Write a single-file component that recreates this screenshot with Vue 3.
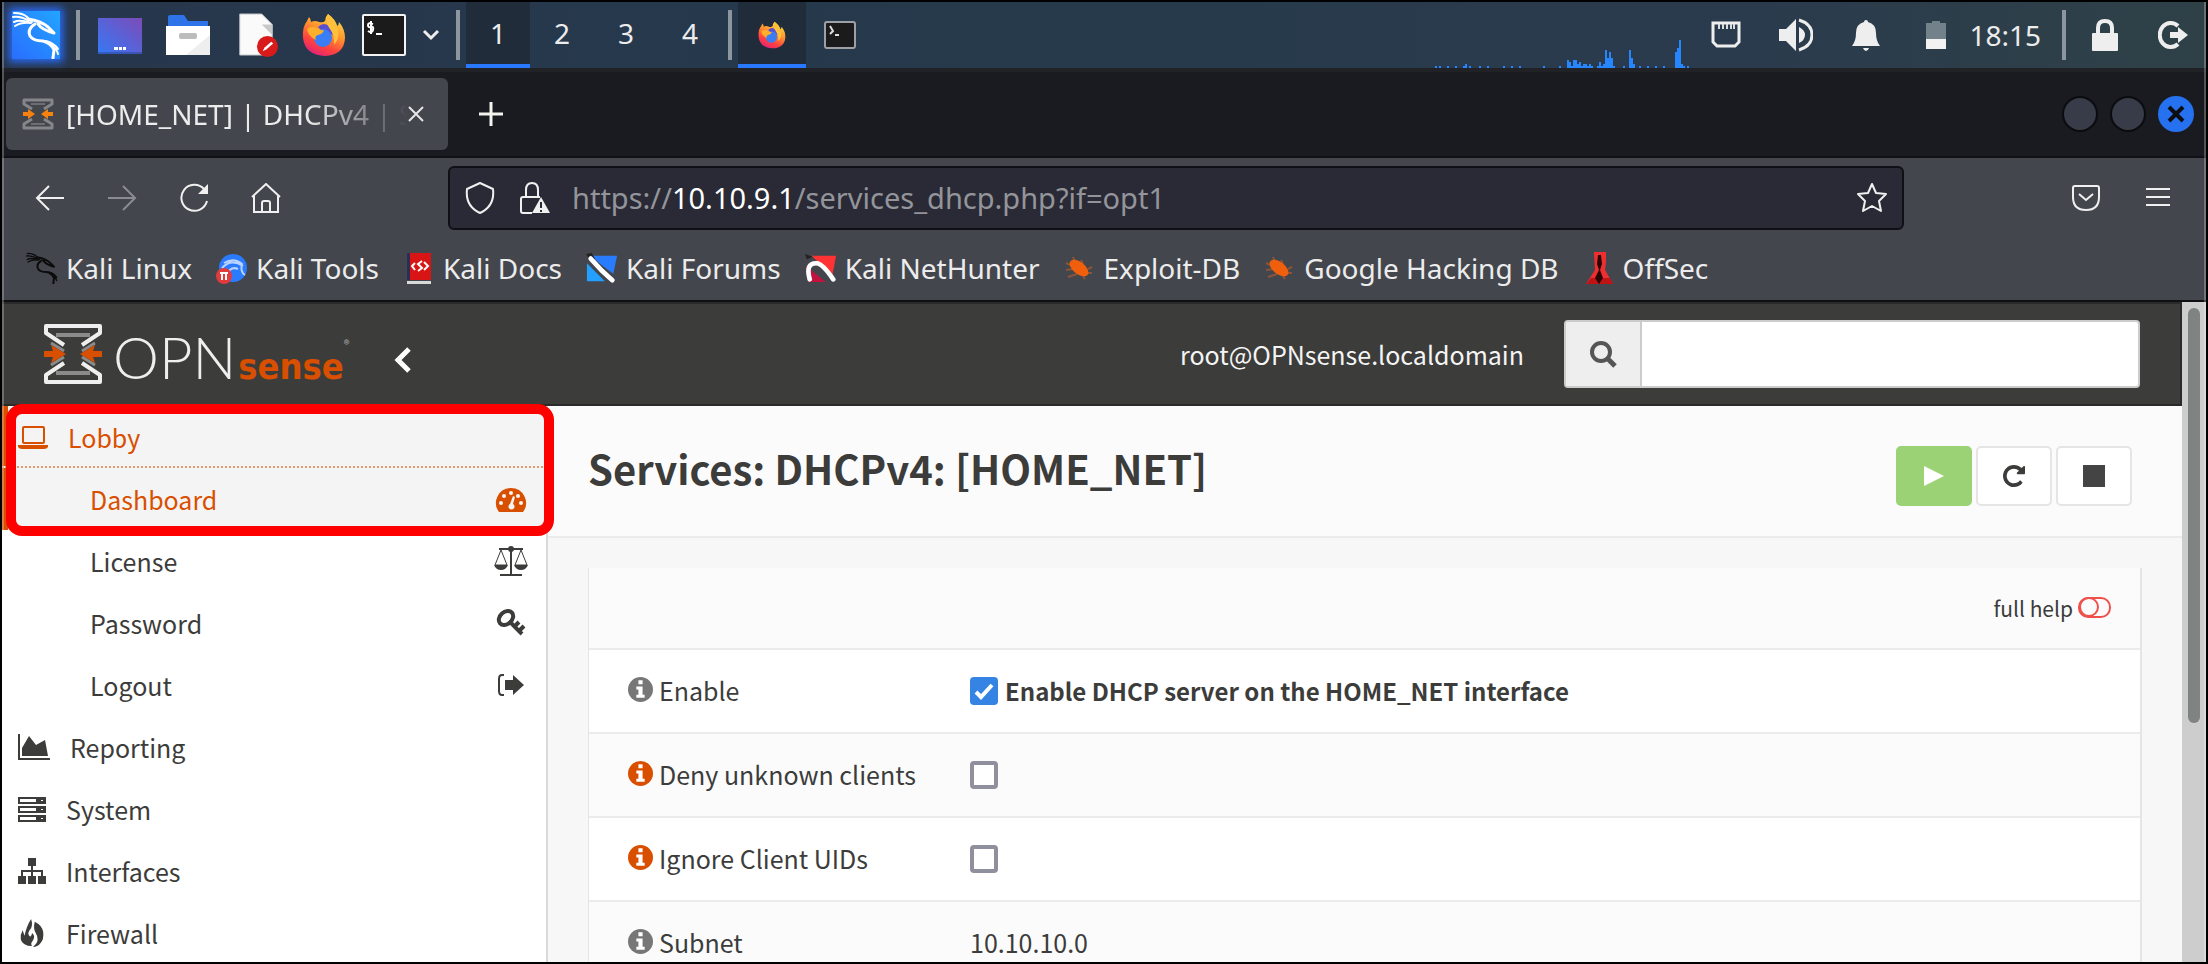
<script setup>
import { ref } from 'vue'

const workspaces = [1, 2, 3, 4]
const activeWorkspace = ref(1)
const search = ref('')

const load = [
  [0, 2], [4, 2], [12, 2], [20, 2], [28, 2], [30, 4], [34, 2], [44, 2], [52, 2], [68, 2], [76, 2], [84, 2],
  [108, 2], [124, 2], [132, 8], [134, 6], [136, 2], [138, 8], [140, 8], [142, 4], [144, 6], [146, 2],
  [148, 4], [150, 4], [152, 2], [154, 4], [156, 2], [162, 2], [164, 6], [166, 2], [168, 4], [170, 18],
  [172, 10], [174, 16], [176, 10], [178, 2], [188, 2], [194, 18], [196, 10], [198, 4], [204, 2],
  [212, 2], [220, 2], [228, 2], [240, 16], [242, 20], [244, 28], [246, 4], [248, 2], [252, 2],
]

const bookmarks = [
  { label: 'Kali Linux', icon: 'bm-dragon' },
  { label: 'Kali Tools', icon: 'bm-tools' },
  { label: 'Kali Docs', icon: 'bm-docs' },
  { label: 'Kali Forums', icon: 'bm-forums' },
  { label: 'Kali NetHunter', icon: 'bm-hunter' },
  { label: 'Exploit-DB', icon: 'bm-bug' },
  { label: 'Google Hacking DB', icon: 'bm-bug' },
  { label: 'OffSec', icon: 'bm-offsec' },
]

const lobby = [
  { label: 'Dashboard', icon: 'i-gauge', active: true },
  { label: 'License', icon: 'i-scale' },
  { label: 'Password', icon: 'i-key' },
  { label: 'Logout', icon: 'i-exit' },
]

const sections = [
  { label: 'Reporting', icon: 'i-chart', wide: true },
  { label: 'System', icon: 'i-server' },
  { label: 'Interfaces', icon: 'i-sitemap' },
  { label: 'Firewall', icon: 'i-fire' },
]

const rows = ref([
  { id: 'enable', label: 'Enable', checked: true, note: 'Enable DHCP server on the HOME_NET interface' },
  { id: 'deny', label: 'Deny unknown clients', checked: false, help: true },
  { id: 'ignore', label: 'Ignore Client UIDs', checked: false, help: true },
  { id: 'subnet', label: 'Subnet', value: '10.10.10.0' },
])
</script>

<template>
  <div class="screen">
    <svg class="defs" aria-hidden="true">
      <defs>
        <linearGradient id="g-desk" x1="0" y1="1" x2="1" y2="0">
          <stop offset="0" stop-color="#3579f6" /><stop offset="1" stop-color="#7d4bb8" />
        </linearGradient>
        <linearGradient id="g-kali" x1="0" y1="1" x2="1" y2="0">
          <stop offset="0" stop-color="#2a6dff" /><stop offset="1" stop-color="#22a5ff" />
        </linearGradient>
        <linearGradient id="g-fox" x1="0.8" y1="0" x2="0.3" y2="1">
          <stop offset="0" stop-color="#ffe14a" /><stop offset="0.4" stop-color="#ff9a2e" />
          <stop offset="0.75" stop-color="#ff4040" /><stop offset="1" stop-color="#e0217a" />
        </linearGradient>
      </defs>
      <symbol id="dragon" viewBox="0 0 48 48">
        <g fill="none" stroke="currentColor" stroke-linecap="round" stroke-linejoin="round">
          <path d="M2 2Q11 2 15 6L20 11M1 6Q9 5 17 10M2 11Q8 8 18 12M3 15Q9 11 19 12" stroke-width="2" />
          <path d="M16 8Q29 10 36 16L42 22M26 13Q30 19 42 22" stroke-width="3" />
          <path d="M23 13Q15 18 18 25Q21 30 31 30Q39 32 42 39L41 47" stroke-width="3" />
          <path d="M34 30Q42 32 46 38M39 34Q45 38 46 43" stroke-width="2" />
        </g>
      </symbol>
      <symbol id="firefox" viewBox="0 0 44 44">
        <path fill="url(#g-fox)" d="M26 1Q34 7 35 13Q37 12 37 9Q43 16 43 25Q42 42 23 43Q3 42 1 25Q0 14 5 8Q6 6 7 4Q9 6 9 9Q13 7 17 9Q21 10 23 8Q23 4 26 1z" />
        <path fill="#5a4fd0" d="M16 14Q22 8 28 14L31 22L20 18z" />
        <circle cx="21" cy="25" r="9" fill="#3a7df5" />
        <path fill="#ffb02a" d="M5 16Q10 12 17 16Q20 18 22 17Q21 21 16 22Q12 23 14 27Q6 23 5 16z" />
        <path fill="#ffc03c" d="M26 1Q34 7 35 14Q39 24 32 32Q33 22 28 16Q23 10 26 1z" />
      </symbol>
      <symbol id="sense-mark" viewBox="0 0 58 60">
        <g fill="none" stroke="#efefef" stroke-width="4" stroke-linejoin="round">
          <path d="M20 21L2 9V2H56V9L38 21" /><path d="M20 39L2 51V58H56V51L38 39" />
        </g>
        <path d="M12 11H46M12 49H46" stroke="#8b8b8b" stroke-width="4" />
        <path d="M7 19l13 8M51 19l-13 8M7 41l13-8M51 41l-13-8" stroke="#8b8b8b" stroke-width="3" />
        <path fill="#d94f00" d="M0 27H9L7 21L22 30L7 39L9 33H0zM58 27H49L51 21L36 30L51 39L49 33H58z" />
      </symbol>
      <symbol id="sense-fav" viewBox="0 0 32 32">
        <g fill="none" stroke="#85868a" stroke-width="3" stroke-linejoin="round">
          <path d="M10 11L2 6V2H30V6L22 11M10 21L2 26V30H30V26L22 21" />
          <path d="M9 6H23M9 26H23" stroke="#6d6e73" stroke-width="2" />
        </g>
        <path fill="#f5820f" d="M1 14H6V11L13 16L6 21V18H1zM31 14H26V11L19 16L26 21V18H31z" />
      </symbol>
      <symbol id="bm-dragon" viewBox="0 0 48 48"><use href="#dragon" color="#0c0c0c" /></symbol>
      <symbol id="bm-tools" viewBox="0 0 32 32">
        <circle cx="17" cy="16" r="14" fill="#2b7bff" />
        <path d="M6 16Q15 6 27 14M8 11Q18 5 26 12Q24 20 29 23M12 21Q15 14 22 17" fill="none" stroke="#b9d4ff" stroke-width="2" />
        <circle cx="8" cy="24" r="8" fill="#e23b3b" />
        <path d="M4 21H12M6 21V28M10 21V28" stroke="#fff" stroke-width="2" />
      </symbol>
      <symbol id="bm-docs" viewBox="0 0 32 32">
        <path fill="#d81414" d="M4 1H28V28H4z" /><path fill="#2b2d52" d="M4 1H7V28H4z" />
        <path fill="#d9d9d9" d="M4 29H28V32H4z" />
        <path d="M12 11l-3 3 3 4M21 10l4 4-4 4M19 9l-4 3 4 4-4 3" fill="none" stroke="#fff" stroke-width="2" />
      </symbol>
      <symbol id="bm-forums" viewBox="0 0 34 32">
        <path fill="#2a7cff" d="M3 3H33L29 22z" /><path fill="#23a0ff" d="M1 11L20 30H1z" />
        <path fill="#222" d="M0 1l6-1 4 7-6 1z" />
        <path d="M5 6L17 19L28 29" stroke="#fff" stroke-width="5" stroke-linecap="round" />
        <path d="M10 7L20 17L27 24" stroke="#444a" stroke-width="1" />
      </symbol>
      <symbol id="bm-hunter" viewBox="0 0 34 32">
        <path fill="#f33" d="M7 3H33L29 24z" /><path fill="#c4123f" d="M1 14L22 31H4z" />
        <path fill="#222" d="M0 1L8 4L2 7z" />
        <path d="M5 28Q0 10 13 11Q19 12 30 28" stroke="#fff" stroke-width="5" fill="none" stroke-linecap="round" />
      </symbol>
      <symbol id="bm-bug" viewBox="0 0 32 32">
        <path d="M9 5L11 11M17 8L19 12M2 11L9 14M2 18L9 17M4 25L13 22M28 15L24 17M28 21L24 21M21 27L19 24" stroke="#8d5338" stroke-width="2" />
        <ellipse cx="15" cy="16" rx="11" ry="6" fill="#f0600c" transform="rotate(38 15 16)" />
      </symbol>
      <symbol id="bm-offsec" viewBox="0 0 32 32">
        <path fill="#ef2f2f" d="M11 0H23V10L22 18L30 32H3L12 18z" /><path fill="#c01414" d="M8 26H27L30 32H3z" />
        <path fill="#2a0505" d="M15 3H18L19 12L17 18L20 26L16 32L12 26L16 18L14 12z" />
      </symbol>

      <symbol id="i-laptop" viewBox="0 0 30 24">
        <rect x="5" y="2" width="21" height="16" rx="1" fill="none" stroke="currentColor" stroke-width="2" />
        <path fill="currentColor" d="M0 20H30V22Q29 24 26 24H4Q1 24 0 22z" />
      </symbol>
      <symbol id="i-gauge" viewBox="-3 -4 36 30">
        <path fill="currentColor" d="M15 0A15 15 0 0 1 27 24H3A15 15 0 0 1 15 0z" />
        <g fill="#f4f4f4"><circle cx="5" cy="15" r="2" /><circle cx="8" cy="8" r="2" /><circle cx="15" cy="5" r="2" />
          <circle cx="22" cy="8" r="2" /><circle cx="25" cy="15" r="2" /><path d="M17 8L19 9L17 16A3 3 0 1 1 14 16z" /></g>
      </symbol>
      <symbol id="i-scale" viewBox="0 0 36 30">
        <path fill="none" stroke="currentColor" stroke-width="2" d="M6 3H30M18 1V28M7 29H29" />
        <path fill="none" stroke="currentColor" stroke-width="1" d="M8 4L2 19H14zM28 4L22 19H34z" />
        <path fill="currentColor" d="M1 19H15Q13 24 8 24T1 19zM21 19H35Q33 24 28 24T21 19z" />
        <circle cx="18" cy="3" r="3" fill="currentColor" />
      </symbol>
      <symbol id="i-key" viewBox="-4 0 36 30">
        <ellipse cx="9" cy="10" rx="8" ry="6" transform="rotate(-42 9 10)" fill="none" stroke="currentColor" stroke-width="4" />
        <path fill="none" stroke="currentColor" stroke-width="4" d="M12 13L25 26M18 18L22 14M22 23L27 18" />
      </symbol>
      <symbol id="i-exit" viewBox="-4 -4 36 30">
        <path fill="none" stroke="currentColor" stroke-width="2" d="M7 1H5Q2 1 2 5V17Q2 21 5 21H7" />
        <path fill="currentColor" d="M8 6H16V1L27 11L16 21V16H8z" />
      </symbol>
      <symbol id="i-chart" viewBox="0 0 32 26">
        <path fill="currentColor" d="M0 0H2V24H32V26H0zM4 22V14L11 2L18 11L27 6L30 22z" />
      </symbol>
      <symbol id="i-server" viewBox="0 0 28 26">
        <g fill="none" stroke="currentColor" stroke-width="2"><path d="M1 2H27V7H1zM1 11H27V16H1zM1 20H27V25H1z" /></g>
        <path fill="currentColor" d="M18 2H27V7H18zM18 11H27V16H18zM18 20H27V25H18z" />
        <path fill="#fff" d="M23 4H25V5H23zM23 13H25V14H23zM23 22H25V23H23z" />
      </symbol>
      <symbol id="i-sitemap" viewBox="0 0 28 26">
        <path fill="currentColor" d="M10 0H18V8H10zM0 18H8V26H0zM10 18H18V26H10zM20 18H28V26H20z" />
        <path fill="none" stroke="currentColor" stroke-width="2" d="M14 8V18M4 18V13H24V18" />
      </symbol>
      <symbol id="i-fire" viewBox="0 0 28 30">
        <path fill="currentColor" d="M13 0Q15 6 13 10Q11 12 10 15Q10 18 12 19Q14 18 14 15Q18 18 15 23Q12 26 14 29Q4 29 2 22Q1 17 4 12L6 18Q8 8 13 0z" />
        <path fill="currentColor" d="M17 3Q25 7 26 14Q27 22 23 26Q20 30 15 30Q20 26 20 22Q20 18 18 15Q15 10 17 3z" />
      </symbol>
      <symbol id="i-repeat" viewBox="0 0 1536 1792">
        <path fill="currentColor" d="M1536 256v448q0 26-19 45t-45 19h-448q-42 0-59-40-17-39 14-69l138-138Q969 384 768 384q-104 0-198 40T406 534 296 697 256 896t40 198T406 1258t163 110T768 1408q119 0 225-52t179-147q7-10 23-12 15 0 25 9l137 138q9 8 9 20T1357 1387q-109 132-264 204T768 1664q-156 0-298-61t-245-164-164-245T0 896t61-298 164-245T470 189t298-61q147 0 284 55T1297 340l130-129q29-31 70-14 39 17 39 59z" />
      </symbol>
    </svg>

    <header class="panel">
      <button class="flat kali" aria-label="Applications">
        <svg viewBox="0 0 48 48"><rect width="48" height="48" fill="url(#g-kali)" /><use href="#dragon" width="48" height="48" color="#fff" /></svg>
      </button>
      <i class="sep"></i>
      <div class="launchers">
        <button class="flat" aria-label="Show desktop">
          <svg class="ic44" viewBox="0 0 44 44"><path fill="url(#g-desk)" d="M0 5H44V41H0z" /><path fill="#24428c" opacity=".5" d="M0 39H44V41H0z" /><path fill="#fff" d="M16 34H20V37H16zM21 34H24V37H21zM25 34H28V37H25z" /></svg>
        </button>
        <button class="flat" aria-label="Files">
          <svg class="ic44" viewBox="0 0 44 44"><path fill="#2f73e8" d="M2 4Q2 2 4 2H18L22 8H42V14H2z" /><path fill="#fff" d="M0 13H44V42H0z" /><path fill="#eee" d="M44 22V42H20z" /><rect x="13" y="20" width="18" height="6" rx="2" fill="#bcbcbc" /></svg>
        </button>
        <button class="flat" aria-label="Text editor">
          <svg class="ic44" viewBox="0 0 44 46"><path fill="#fafafa" stroke="#b9bec4" d="M5 1H28L39 12V44H5z" /><path fill="#c9c9c9" d="M28 12H39V23z" /><circle cx="34" cy="35" r="11" fill="#d81a1a" /><path d="M29 40L31 36L38 30L40 32L33 38z" fill="#fff" /></svg>
        </button>
        <button class="flat" aria-label="Firefox"><svg class="ic44"><use href="#firefox" /></svg></button>
      </div>
      <div class="terminal-launch">
        <button class="flat" aria-label="Terminal">
          <svg class="ic44" viewBox="0 0 44 44"><rect x="1" y="2" width="42" height="40" rx="1" fill="#1b1b1b" stroke="#f4f4f4" stroke-width="2" /><path d="M11 11Q6 9 6 12T9 14T11 17T6 18M9 8V21" fill="none" stroke="#fff" stroke-width="2" /><path fill="#fff" d="M14 20H20V22H14z" /></svg>
        </button>
        <button class="flat" aria-label="More terminals"><svg width="18" height="12" viewBox="0 0 18 12"><path d="M2 2L9 9L16 2" fill="none" stroke="#eee" stroke-width="3" /></svg></button>
      </div>
      <i class="sep"></i>
      <nav class="spaces">
        <button v-for="n in workspaces" :key="n" class="flat space" :class="{ on: n === activeWorkspace }" @click="activeWorkspace = n">{{ n }}</button>
      </nav>
      <i class="sep near"></i>
      <div class="tasks">
        <button class="flat task on" aria-label="Firefox window"><svg width="28" height="28"><use href="#firefox" /></svg></button>
        <button class="flat task" aria-label="Terminal window">
          <svg width="32" height="28" viewBox="0 0 32 28"><rect x="1" y="1" width="30" height="26" rx="2" fill="#1b1b1b" stroke="#9da1a5" stroke-width="2" /><path d="M6 5L9 10L6 13M11 14H15" fill="none" stroke="#ddd" stroke-width="2" /></svg>
        </button>
      </div>
      <svg class="load" width="256" height="66" viewBox="0 0 256 66" aria-hidden="true">
        <rect v-for="b in load" :key="b[0]" :x="b[0]" :y="66 - b[1]" width="2" :height="b[1]" fill="#2686ff" />
      </svg>
      <div class="tray">
        <button class="flat" aria-label="Network"><svg width="30" height="28" viewBox="0 0 30 28"><path d="M2 2H28V21L24 25H6L2 21z" fill="none" stroke="#eee" stroke-width="3" /><path d="M8 3V8M12 3V8M16 3V8M20 3V8M23 3V8" stroke="#ddd" stroke-width="2" /></svg></button>
        <button class="flat" aria-label="Volume"><svg width="34" height="34" viewBox="0 0 34 34"><path fill="#eee" d="M0 11H7L17 1V33L7 23H0z" /><path d="M20 9Q26 12 26 17T20 25z" fill="#eee" /><path d="M20 2Q33 6 33 17T20 32" fill="none" stroke="#eee" stroke-width="3" /></svg></button>
        <button class="flat" aria-label="Notifications"><svg width="28" height="32" viewBox="0 0 28 32"><path fill="#eee" d="M14 1Q16 1 16 3Q24 5 24 14Q24 22 28 27H0Q4 22 4 14Q4 5 12 3Q12 1 14 1zM11 29H17Q16 32 14 32T11 29z" /></svg></button>
        <button class="flat" aria-label="Battery"><svg width="20" height="28" viewBox="0 0 20 28"><path fill="#72818a" d="M6 0H14V2H20V18H0V2H6z" /><path fill="#f2f2f2" d="M0 18H20V28H0z" /></svg></button>
        <time>18:15</time>
        <i class="sep"></i>
        <button class="flat" aria-label="Lock"><svg width="28" height="32" viewBox="0 0 28 32"><path d="M7 16V9Q7 2 14 2T21 9V16" fill="none" stroke="#eee" stroke-width="4" /><rect y="14" x="1" width="26" height="18" rx="1" fill="#eee" /></svg></button>
        <button class="flat" aria-label="Log out"><svg width="30" height="28" viewBox="0 0 30 28"><path d="M20 5A11 12 0 1 0 20 23" fill="none" stroke="#eee" stroke-width="4" /><path fill="#eee" d="M12 11H20V6L30 14L20 22V17H12z" /></svg></button>
      </div>
    </header>

    <div class="window">
      <div class="tabstrip">
        <div class="tab">
          <svg class="favicon"><use href="#sense-fav" /></svg>
          <span class="tab-title">[HOME_NET] | DHCPv4 | S</span>
          <button class="flat" aria-label="Close tab"><svg width="16" height="16" viewBox="0 0 16 16"><path d="M1 1L15 15M15 1L1 15" stroke="#e6e6e6" stroke-width="2" /></svg></button>
        </div>
        <button class="flat newtab" aria-label="New tab"><svg width="26" height="26" viewBox="0 0 26 26"><path d="M13 1V25M1 13H25" stroke="#f2f2ee" stroke-width="3" /></svg></button>
        <div class="controls">
          <button class="flat dot" aria-label="Minimize"></button>
          <button class="flat dot" aria-label="Maximize"></button>
          <button class="flat dot close" aria-label="Close"><svg width="18" height="18" viewBox="0 0 18 18"><path d="M2 2L16 16M16 2L2 16" stroke="#0b0d12" stroke-width="4" /></svg></button>
        </div>
      </div>

      <div class="toolbar">
        <div class="navbtns">
          <button class="flat" aria-label="Back"><svg width="30" height="30" viewBox="0 0 30 30"><path d="M29 15H2M14 3L2 15L14 27" fill="none" stroke="#f0f0f0" stroke-width="2" /></svg></button>
          <button class="flat" aria-label="Forward"><svg width="30" height="30" viewBox="0 0 30 30"><path d="M1 15H28M16 3L28 15L16 27" fill="none" stroke="#8b8c91" stroke-width="2" /></svg></button>
          <button class="flat" aria-label="Reload"><svg width="30" height="30" viewBox="0 0 30 30"><path d="M28 18A13 13 0 1 1 25 6" fill="none" stroke="#f0f0f0" stroke-width="2" /><path fill="#f0f0f0" d="M29 1V11H19z" /></svg></button>
          <button class="flat" aria-label="Home"><svg width="30" height="30" viewBox="0 0 30 30"><path d="M1 14L15 1L29 14M3 13V29H27V13M11 29V20Q11 18 13 18H17Q19 18 19 20V29" fill="none" stroke="#f0f0f0" stroke-width="2" /></svg></button>
        </div>
        <div class="urlbar">
          <svg width="32" height="32" viewBox="0 0 32 32"><path d="M16 1L29 7Q31 24 16 31Q1 24 3 7z" fill="none" stroke="#f0f0f0" stroke-width="2" stroke-linejoin="round" /></svg>
          <svg class="lockwarn" width="32" height="32" viewBox="0 0 32 32"><path d="M8 15V8Q8 1 14 1T20 8V15M14 31H5Q3 31 3 29V17Q3 15 5 15H22" fill="none" stroke="#f0f0f0" stroke-width="2" /><path fill="#f0f0f0" d="M23 15L32 31H14z" /><path d="M23 20V26M23 28V30" stroke="#292a35" stroke-width="2" /></svg>
          <span class="url">https://<b>10.10.9.1</b>/services_dhcp.php?if=opt1</span>
          <button class="flat" aria-label="Bookmark this page"><svg width="32" height="32" viewBox="0 0 32 32"><path d="M16 2L20 11L30 12L23 19L25 29L16 24L7 29L9 19L2 12L12 11z" fill="none" stroke="#f0f0f0" stroke-width="2" stroke-linejoin="round" /></svg></button>
        </div>
        <div class="menubtns">
          <button class="flat" aria-label="Save to Pocket"><svg width="28" height="28" viewBox="0 0 28 28"><path d="M3 2H25Q27 2 27 4V13Q27 26 14 26T1 13V4Q1 2 3 2zM7 10L14 16L21 10" fill="none" stroke="#f0f0f0" stroke-width="2" /></svg></button>
          <button class="flat" aria-label="Menu"><svg width="24" height="22" viewBox="0 0 24 22"><path d="M0 2H24M0 10H24M0 18H24" stroke="#f0f0f0" stroke-width="2" /></svg></button>
        </div>
      </div>

      <nav class="bookmarks">
        <a v-for="b in bookmarks" :key="b.label" href="#"><svg><use :href="'#' + b.icon" /></svg>{{ b.label }}</a>
      </nav>

      <div class="viewport">
        <div class="page">
          <header class="top">
            <a class="logo" href="#" aria-label="OPNsense">
              <svg width="58" height="60"><use href="#sense-mark" /></svg>
              <span class="opn">OPN</span><span class="sense">sense</span><span class="reg">®</span>
            </a>
            <button class="flat collapse" aria-label="Collapse menu"><svg width="18" height="26" viewBox="0 0 18 26"><path d="M15 2L4 13L15 24" fill="none" stroke="#fff" stroke-width="5" /></svg></button>
            <span class="who">root@OPNsense.localdomain</span>
            <form class="search" @submit.prevent>
              <label for="menu-search" aria-label="Search"><svg width="28" height="28" viewBox="0 0 28 28"><circle cx="12" cy="12" r="9" fill="none" stroke="#555" stroke-width="4" /><path d="M18 18L26 26" stroke="#555" stroke-width="5" /></svg></label>
              <input id="menu-search" v-model="search" type="text">
            </form>
          </header>

          <div class="cols">
            <aside class="side">
              <a class="item main active" href="#"><svg width="30" height="24"><use href="#i-laptop" /></svg>Lobby</a>
              <a v-for="l in lobby" :key="l.label" class="item sub" :class="{ active: l.active }" href="#">{{ l.label }}<svg width="36" height="30"><use :href="'#' + l.icon" /></svg></a>
              <a v-for="s in sections" :key="s.label" class="item main" href="#"><svg :width="s.wide ? 32 : 28" height="28"><use :href="'#' + s.icon" /></svg>{{ s.label }}</a>
              <div class="highlight"></div>
            </aside>

            <main>
              <div class="title">
                <h1>Services: DHCPv4: [HOME_NET]</h1>
                <div class="actions">
                  <button class="go" aria-label="Start service"><svg width="20" height="20" viewBox="0 0 20 20"><path fill="#fff" d="M0 0L20 10L0 20z" /></svg></button>
                  <button aria-label="Restart service"><svg width="22" height="26"><use href="#i-repeat" /></svg></button>
                  <button aria-label="Stop service"><svg width="22" height="22"><rect width="22" height="22" fill="#444" /></svg></button>
                </div>
              </div>
              <table>
                <tbody>
                  <tr class="helprow">
                    <td colspan="2"><button class="flat full">full help<svg width="34" height="22" viewBox="0 0 34 22"><rect x="1" y="1" width="31" height="19" rx="9" fill="none" stroke="#f0504a" stroke-width="2" /><circle cx="11" cy="10" r="9" fill="none" stroke="#f0504a" stroke-width="2" /></svg></button></td>
                  </tr>
                  <tr v-for="r in rows" :key="r.id">
                    <td class="name">
                      <label :for="r.id">
                        <svg width="25" height="25" viewBox="0 0 24 24" :class="{ help: r.help }"><circle cx="12" cy="12" r="12" fill="currentColor" /><path fill="#fff" d="M10 3H14V7H10zM8 9H14V17H16V20H8V17H10V12H8z" /></svg>
                        {{ r.label }}
                      </label>
                    </td>
                    <td :class="{ text: r.value }">
                      <output v-if="r.value" :id="r.id">{{ r.value }}</output>
                      <div v-else class="field"><input :id="r.id" v-model="r.checked" type="checkbox"><strong v-if="r.note">{{ r.note }}</strong></div>
                    </td>
                  </tr>
                </tbody>
              </table>
            </main>
          </div>
        </div>
        <div class="scrollbar"><div class="thumb"></div></div>
      </div>
    </div>
  </div>
</template>

<style>
html, body { margin: 0; background: #000; }
</style>

<style scoped>
* { box-sizing: border-box; }
.screen {
  position: relative;
  display: flex;
  flex-direction: column;
  height: 100vh;
  overflow: hidden;
  border: 2px solid #000;
  background: #1a1b20;
  font: 28px/36px "Noto Sans", sans-serif;
  color: #ececec;
}
.screen::after {
  content: "";
  position: absolute;
  inset: 0;
  border: solid rgba(255, 255, 255, 0.25);
  border-width: 0 2px;
  pointer-events: none;
}
.defs { position: absolute; width: 0; height: 0; }
svg { display: block; flex: none; }
a { color: inherit; text-decoration: none; }
.flat { display: flex; align-items: center; justify-content: center; padding: 0; border: 0; background: none; color: inherit; font: inherit; }

.panel {
  flex: none;
  display: flex;
  align-items: center;
  height: 70px;
  padding-left: 10px;
  border-bottom: 4px solid #202226;
  background: linear-gradient(90deg, #27364c, #263a4c 45%, #2a3b4d 80%, #2f4147);
}
.kali svg { width: 48px; height: 48px; box-shadow: 0 0 8px 3px #2a6dff; }
.sep { flex: none; width: 4px; height: 50px; background: #8d959e; margin-left: 16px; }
.sep.near { margin-left: 6px; }
.launchers { display: flex; gap: 24px; margin-left: 18px; }
.terminal-launch { display: flex; gap: 16px; margin-left: 16px; }
.ic44 { width: 44px; height: 44px; }
.spaces, .tasks { display: flex; align-self: stretch; margin-left: 6px; }
.space { width: 64px; border: solid transparent; border-width: 0 0 4px; }
.task { width: 68px; border: solid transparent; border-width: 4px 0; }
.on { background: #202c3a; border-bottom-color: #2979ff; }
.tasks .on { border-top-color: #202c3a; }
.load { margin-left: auto; }
.tray { display: flex; align-items: center; }
.tray .flat { width: 70px; }
.tray .flat:last-child { width: 66px; }
.tray time { margin: 0 5px 0 -2px; }
.tray .sep { margin-right: 4px; }

.window { flex: 1; min-height: 0; display: flex; flex-direction: column; background: #44464d; }
.tabstrip { flex: none; display: flex; align-items: center; height: 86px; padding: 0 12px 0 4px; border-bottom: 2px solid #101116; background: #1a1b20; }
.tab { display: flex; align-items: center; width: 442px; height: 72px; padding: 0 24px 0 16px; border-radius: 6px; background: #44464d; }
.favicon { width: 32px; height: 32px; }
.tab-title {
  flex: 1;
  min-width: 0;
  margin-left: 12px;
  white-space: nowrap;
  mask-image: linear-gradient(90deg, #000 70%, transparent 100%);
}
.newtab { margin-left: 30px; }
.controls { display: flex; gap: 12px; margin-left: auto; }
.dot { width: 36px; height: 36px; border: 2px solid #0b0c0f; border-radius: 50%; background: #383b48; }
.close { border: 0; background: #2671ef; }

.toolbar { flex: none; display: flex; align-items: center; height: 80px; }
.navbtns { display: flex; gap: 42px; padding-left: 33px; width: 446px; }
.urlbar { flex: 1; display: flex; align-items: center; height: 64px; max-width: calc(100% - 748px); padding: 0 14px; border: 2px solid #0f1015; border-radius: 6px; background: #292a35; }
.lockwarn { margin: 0 22px; }
.url { flex: 1; font-size: 29px; color: #94959b; white-space: nowrap; }
.url b { font-weight: 400; color: #fff; }
.menubtns { display: flex; gap: 46px; margin-left: auto; padding-right: 36px; }

.bookmarks { flex: none; display: flex; gap: 24px; height: 64px; padding: 0 24px 2px; border-bottom: 2px solid #0f1012; }
.bookmarks a { display: flex; align-items: center; gap: 8px; white-space: nowrap; }
.bookmarks svg { width: 32px; height: 32px; }

.viewport { flex: 1; min-height: 0; display: flex; font: 25px/36px "Noto Sans CJK SC", "Noto Sans", sans-serif; color: #3c3c3b; }
.page { flex: 1; min-width: 0; display: flex; flex-direction: column; background: #f7f7f7; }
.top { flex: none; display: flex; align-items: center; height: 104px; padding: 0 40px; border: 2px solid #2a2a2a; border-left: 0; background: #3c3c3b; color: #f4f4f4; }
.logo { display: flex; align-items: baseline; width: 304px; height: 60px; margin-left: 2px; color: #efefef; white-space: nowrap; }
.logo svg { align-self: center; }
.opn { margin-left: 11px; font: 300 58px/66px Lato, sans-serif; }
.sense { margin-left: 2px; font: bold 36px/44px "DejaVu Sans Condensed", "Noto Sans", sans-serif; color: #d94f00; }
.reg { align-self: flex-start; padding-top: 12px; font-size: 12px; line-height: 16px; color: #aaa; }
.collapse { width: 18px; height: 26px; margin: 12px 0 0 46px; }
.who { margin-left: auto; }
.search { display: flex; width: 576px; height: 68px; margin-left: 40px; border: 2px solid #ccc; border-radius: 4px; background: #fff; overflow: hidden; }
.search label { display: flex; align-items: center; justify-content: center; width: 76px; border-right: 2px solid #ccc; background: #eee; }
.search input { flex: 1; min-width: 0; border: 0; background: none; outline: 0; font: inherit; }

.cols { flex: 1; min-height: 0; display: flex; }
.side { position: relative; flex: none; width: 546px; border-right: 2px solid #d9d9d9; background: #fff; }
.item { display: flex; align-items: center; height: 62px; }
.main { padding-left: 16px; }
.main svg { margin-right: 20px; }
.sub { justify-content: space-between; padding: 0 17px 0 88px; }
.active { background: #f4f4f4; color: #d94f00; box-shadow: inset 6px 0 #d94f00; }
.main.active { padding-top: 2px; border: dotted #e69a70; border-width: 0 2px 2px 0; }
.highlight { position: absolute; left: 4px; top: -2px; right: -8px; height: 132px; border: 10px solid #f00; border-radius: 16px; }

main { flex: 1; min-width: 0; display: flex; flex-direction: column; gap: 30px; }
.title { flex: none; display: flex; align-items: flex-start; justify-content: space-between; height: 132px; padding: 40px 50px 0 40px; border-bottom: 2px solid #ebebeb; background: #fbfbfb; }
h1 { margin: 0; font-size: 40px; line-height: 44px; font-weight: 700; }
.actions { display: flex; gap: 4px; }
.actions button { display: flex; align-items: center; justify-content: center; width: 76px; height: 60px; padding: 0; border: 2px solid #e5e5e5; border-radius: 5px; background: #fff; color: #3c3c3b; }
.actions .go { border-color: #9bd275; background: #9bd275; }
table { flex: none; margin: 0 40px; border-collapse: separate; border-spacing: 0; border: solid #e5e5e5; border-width: 0 2px 0 1px; }
td { height: 84px; padding: 0; border-bottom: 2px solid #ebebeb; background: #fbfbfb; }
tr:nth-child(even) td { background: #fff; }
.helprow td { height: 82px; padding: 0 28px; }
.full { margin-left: auto; gap: 5px; font-size: 21px; }
.name { width: 381px; padding: 0 0 3px 39px; }
.text { padding-bottom: 3px; }
.name label { display: flex; align-items: center; gap: 6px; }
.name svg { color: #777; }
.name svg.help { color: #d94f00; }
.field { display: flex; align-items: center; gap: 7px; }
.field strong { font-size: 24px; font-weight: 700; }
input[type="checkbox"] { appearance: none; width: 28px; height: 28px; margin: 0; border: 4px solid #8f8f9d; border-radius: 4px; background: #fff; }
input[type="checkbox"]:checked {
  border: 0;
  background: #3584e4 url("data:image/svg+xml,%3Csvg xmlns='http://www.w3.org/2000/svg' viewBox='0 0 28 28'%3E%3Cpath d='M6 15L11 20L22 8' fill='none' stroke='white' stroke-width='4'/%3E%3C/svg%3E") center / 28px;
}
.scrollbar { flex: none; width: 24px; padding: 6px; background: #cdcdcd; }
.thumb { height: 64%; border-radius: 6px; background: #7f8483; }
</style>
